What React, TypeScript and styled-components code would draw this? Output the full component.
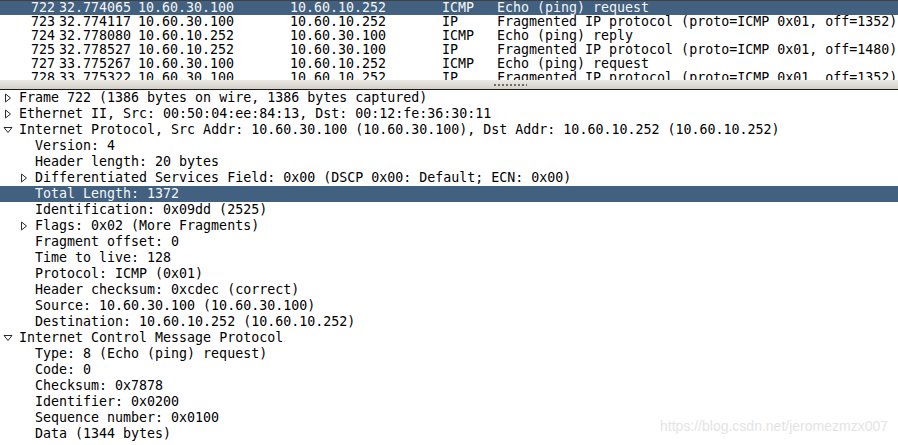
import React, { ReactElement } from "react";
import styled, { createGlobalStyle } from "styled-components";

const GlobalStyle = createGlobalStyle`
    html, body {
        margin: 0;
        padding: 0;
        background: #ffffff;
        overflow: hidden;
    }
`;

const Window = styled.div`
    position: relative;
    display: flex;
    flex-direction: column;
    width: 898px;
    height: 445px;
    overflow: hidden;
    background: #ffffff;
    font-family: "DejaVu Sans Mono", "Liberation Mono", monospace;
    font-size: 13.3px;
    color: #000000;
`;

const PacketList = styled.div`
    height: 79px;
    flex-shrink: 0;
    overflow: hidden;
    border-top: 1px solid #404040;
`;

const PacketRow = styled.div<{ $selected?: boolean }>`
    display: grid;
    grid-template-columns: 59px 79px 152px 152px 55px 1fr;
    height: 14px;
    line-height: 14px;
    white-space: pre;
    background: ${(p) => (p.$selected ? "#42607f" : "transparent")};
    color: ${(p) => (p.$selected ? "#f4f6f8" : "#000000")};
`;

const Cell = styled.span<{ $right?: boolean }>`
    overflow: hidden;
    text-align: ${(p) => (p.$right ? "right" : "left")};
    padding-right: ${(p) => (p.$right ? "4px" : "0")};
`;

const Splitter = styled.div`
    height: 9px;
    flex-shrink: 0;
    display: flex;
    align-items: center;
    padding-left: 493px;
    background: linear-gradient(#ebe9e4, #d4d0c8);
    border-bottom: 1px solid #1a1a1a;
`;

const Grip = styled.div`
    width: 34px;
    height: 2px;
    background-image: radial-gradient(circle, #6e6a62 0.9px, transparent 1px);
    background-size: 4px 2px;
`;

const DetailTree = styled.div`
    flex: 1;
    overflow: hidden;
`;

const TreeRow = styled.div<{ $level: number; $selected?: boolean }>`
    display: flex;
    align-items: center;
    height: 16px;
    line-height: 16px;
    padding-left: ${(p) => 3 + p.$level * 16}px;
    white-space: pre;
    background: ${(p) => (p.$selected ? "#42607f" : "transparent")};
    color: ${(p) => (p.$selected ? "#f4f6f8" : "#000000")};
`;

const Toggle = styled.span`
    width: 16px;
    height: 16px;
    flex-shrink: 0;
    display: flex;
    align-items: center;
`;

const Watermark = styled.div`
    position: absolute;
    right: 10px;
    bottom: 11px;
    font-family: "Liberation Sans", Arial, sans-serif;
    font-size: 14px;
    color: #e4e4e4;
`;

const Expander = ({ open }: { open: boolean }): ReactElement => (
    <svg width="10" height="10" viewBox="0 0 10 10">
        {open ? (
            <polygon points="1,2.5 9,2.5 5,7.5" fill="none" stroke="#2a2a2a" strokeWidth="1" />
        ) : (
            <polygon points="2.5,1 7.5,5 2.5,9" fill="none" stroke="#2a2a2a" strokeWidth="1" />
        )}
    </svg>
);

const packets = [
    ["722", "32.774065", "10.60.30.100", "10.60.10.252", "ICMP", "Echo (ping) request"],
    ["723", "32.774117", "10.60.30.100", "10.60.10.252", "IP", "Fragmented IP protocol (proto=ICMP 0x01, off=1352)"],
    ["724", "32.778080", "10.60.10.252", "10.60.30.100", "ICMP", "Echo (ping) reply"],
    ["725", "32.778527", "10.60.10.252", "10.60.30.100", "IP", "Fragmented IP protocol (proto=ICMP 0x01, off=1480)"],
    ["727", "33.775267", "10.60.30.100", "10.60.10.252", "ICMP", "Echo (ping) request"],
    ["728", "33.775322", "10.60.30.100", "10.60.10.252", "IP", "Fragmented IP protocol (proto=ICMP 0x01, off=1352)"]
];

interface Node {
    text: string;
    level: number;
    toggle?: "open" | "closed";
    selected?: boolean;
}

const tree: Node[] = [
    { text: "Frame 722 (1386 bytes on wire, 1386 bytes captured)", level: 0, toggle: "closed" },
    { text: "Ethernet II, Src: 00:50:04:ee:84:13, Dst: 00:12:fe:36:30:11", level: 0, toggle: "closed" },
    {
        text: "Internet Protocol, Src Addr: 10.60.30.100 (10.60.30.100), Dst Addr: 10.60.10.252 (10.60.10.252)",
        level: 0,
        toggle: "open"
    },
    { text: "Version: 4", level: 1 },
    { text: "Header length: 20 bytes", level: 1 },
    { text: "Differentiated Services Field: 0x00 (DSCP 0x00: Default; ECN: 0x00)", level: 1, toggle: "closed" },
    { text: "Total Length: 1372", level: 1, selected: true },
    { text: "Identification: 0x09dd (2525)", level: 1 },
    { text: "Flags: 0x02 (More Fragments)", level: 1, toggle: "closed" },
    { text: "Fragment offset: 0", level: 1 },
    { text: "Time to live: 128", level: 1 },
    { text: "Protocol: ICMP (0x01)", level: 1 },
    { text: "Header checksum: 0xcdec (correct)", level: 1 },
    { text: "Source: 10.60.30.100 (10.60.30.100)", level: 1 },
    { text: "Destination: 10.60.10.252 (10.60.10.252)", level: 1 },
    { text: "Internet Control Message Protocol", level: 0, toggle: "open" },
    { text: "Type: 8 (Echo (ping) request)", level: 1 },
    { text: "Code: 0", level: 1 },
    { text: "Checksum: 0x7878", level: 1 },
    { text: "Identifier: 0x0200", level: 1 },
    { text: "Sequence number: 0x0100", level: 1 },
    { text: "Data (1344 bytes)", level: 1 }
];

const App = (): ReactElement => (
    <>
        <GlobalStyle />
        <Window>
            <PacketList>
                {packets.map((p, i) => (
                    <PacketRow key={p[0]} $selected={i === 0}>
                        <Cell $right>{p[0]}</Cell>
                        <Cell>{p[1]}</Cell>
                        <Cell>{p[2]}</Cell>
                        <Cell>{p[3]}</Cell>
                        <Cell>{p[4]}</Cell>
                        <Cell>{p[5]}</Cell>
                    </PacketRow>
                ))}
            </PacketList>
            <Splitter>
                <Grip />
            </Splitter>
            <DetailTree>
                {tree.map((n) => (
                    <TreeRow key={n.text} $level={n.level} $selected={n.selected}>
                        <Toggle>{n.toggle ? <Expander open={n.toggle === "open"} /> : null}</Toggle>
                        {n.text}
                    </TreeRow>
                ))}
            </DetailTree>
            <Watermark>https://blog.csdn.net/jeromezmzx007</Watermark>
        </Window>
    </>
);

export default App;
